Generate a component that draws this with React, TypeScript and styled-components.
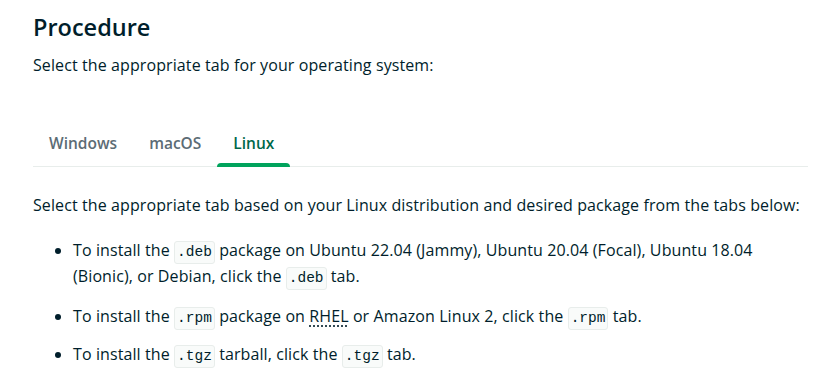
import styled, { createGlobalStyle } from "styled-components";

const GlobalStyle = createGlobalStyle`
  body {
    margin: 0;
    background: #ffffff;
    font-family: "Open Sans", "Liberation Sans", sans-serif;
    color: #001e2b;
  }
`;

const Page = styled.div`
  display: flex;
  flex-flow: column nowrap;
  width: 775px;
  padding: 12px 0 0 33px;
`;

const Title = styled.h2`
  margin: 0;
  font-size: 23.5px;
  line-height: 30px;
  font-weight: 600;
`;

const Text = styled.p`
  margin: 0;
  font-size: 16px;
  line-height: 25px;
  letter-spacing: 0.1px;
`;

const Lead = styled(Text)`
  margin-top: 11px;
`;

const TabList = styled.div`
  display: flex;
  margin-top: 40px;
  border-bottom: 1px solid #e8edeb;
`;

const Tab = styled.button<{ $active?: boolean }>`
  position: relative;
  border: 0;
  background: none;
  cursor: pointer;
  padding: 14px 16px 12px;
  font-family: "Open Sans", "Liberation Sans", sans-serif;
  font-size: 15.5px;
  font-weight: 600;
  color: ${({ $active }) => ($active ? "#00684a" : "#5c6c75")};

  &::after {
    content: "";
    position: absolute;
    left: 0;
    right: 0;
    bottom: -1px;
    height: 4px;
    border-radius: 4px 4px 0 0;
    background: ${({ $active }) => ($active ? "#00a35c" : "transparent")};
  }
`;

const Intro = styled(Text)`
  margin-top: 26px;
`;

const List = styled.ul`
  margin: 20px 0 0;
  padding-left: 40px;
  font-size: 16px;
  line-height: 25px;
  letter-spacing: 0.1px;
`;

const Item = styled.li`
  margin-bottom: 14px;

  &:last-child {
    margin-top: -2px;
  }
`;

const Code = styled.code`
  display: inline-block;
  font-family: "Liberation Mono", monospace;
  font-size: 14.5px;
  line-height: 21px;
  letter-spacing: 0;
  background: #f9fbfa;
  border: 1px solid #e8edeb;
  border-radius: 3px;
  padding: 0 2px;
  color: #001e2b;
`;

const Abbr = styled.abbr`
  text-decoration: underline dotted;
  text-underline-offset: 4px;
`;

export default function App() {
  return (
    <Page>
      <GlobalStyle />
      <Title>Procedure</Title>
      <Lead>Select the appropriate tab for your operating system:</Lead>
      <TabList>
        <Tab>Windows</Tab>
        <Tab>macOS</Tab>
        <Tab $active>Linux</Tab>
      </TabList>
      <Intro>
        Select the appropriate tab based on your Linux distribution and desired
        package from the tabs below:
      </Intro>
      <List>
        <Item>
          To install the <Code>.deb</Code> package on Ubuntu 22.04 (Jammy),
          Ubuntu 20.04 (Focal), Ubuntu 18.04 (Bionic), or Debian, click the{" "}
          <Code>.deb</Code> tab.
        </Item>
        <Item>
          To install the <Code>.rpm</Code> package on{" "}
          <Abbr title="Red Hat Enterprise Linux">RHEL</Abbr> or Amazon Linux 2,
          click the <Code>.rpm</Code> tab.
        </Item>
        <Item>
          To install the <Code>.tgz</Code> tarball, click the <Code>.tgz</Code>{" "}
          tab.
        </Item>
      </List>
    </Page>
  );
}
